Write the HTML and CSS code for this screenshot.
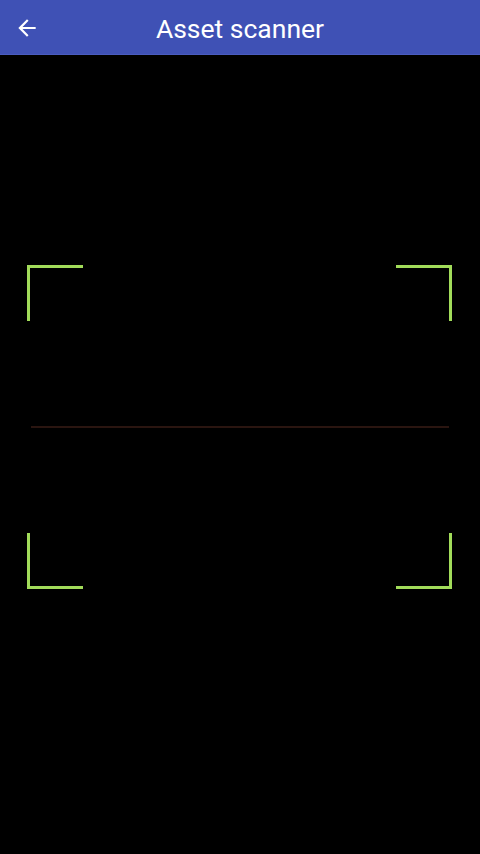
FILE: index.html
```html
<!DOCTYPE html>
<html>
<head>
<meta charset="utf-8">
<link rel="stylesheet" href="styles.css">
</head>
<body>
<header class="appbar">
  <button class="back" aria-label="Back">
    <svg width="26" height="26" viewBox="0 0 24 24"><path d="M20 11H7.83l5.59-5.59L12 4l-8 8 8 8 1.41-1.41L7.83 13H20v-2z" fill="#ffffff"/></svg>
  </button>
  <h1 class="title">Asset scanner</h1>
  <span class="spacer"></span>
</header>
<main class="viewport">
  <div class="frame">
    <span class="corner tl"></span>
    <span class="corner tr"></span>
    <span class="corner bl"></span>
    <span class="corner br"></span>
    <div class="laser"></div>
  </div>
</main>
</body>
</html>
```
FILE: styles.css
```css
html, body {
  margin: 0;
  padding: 0;
  background: #000;
  width: 480px;
  height: 854px;
  overflow: hidden;
  font-family: Roboto, "Noto Sans", sans-serif;
}
.appbar {
  height: 54px;
  background: #3f51b5;
  border-bottom: 1px solid #4a5cc0;
  display: grid;
  grid-template-columns: 54px 1fr 54px;
  align-items: center;
}
.back {
  justify-self: center;
  width: 26px;
  height: 26px;
  padding: 0;
  margin-top: 2px;
  border: 0;
  background: none;
  display: flex;
  align-items: center;
  justify-content: center;
}
.title {
  margin: 0;
  text-align: center;
  color: #fff;
  font-size: 26.5px;
  font-weight: 400;
  line-height: 54px;
  padding-top: 2px;
  height: 54px;
  box-sizing: border-box;
}
.viewport {
  padding-top: 210px;
}
.frame {
  position: relative;
  margin-left: 27px;
  width: 425px;
  height: 324px;
}
.corner {
  position: absolute;
  width: 53px;
  height: 53px;
  border: 0 solid #a2dc5a;
}
.tl { left: 0; top: 0; border-left-width: 3px; border-top-width: 3px; }
.tr { right: 0; top: 0; border-right-width: 3px; border-top-width: 3px; }
.bl { left: 0; bottom: 0; border-left-width: 3px; border-bottom-width: 3px; }
.br { right: 0; bottom: 0; border-right-width: 3px; border-bottom-width: 3px; }
.laser {
  position: absolute;
  left: 4px;
  right: 3px;
  top: 161px;
  height: 2px;
  background: #2a1510;
}
```
